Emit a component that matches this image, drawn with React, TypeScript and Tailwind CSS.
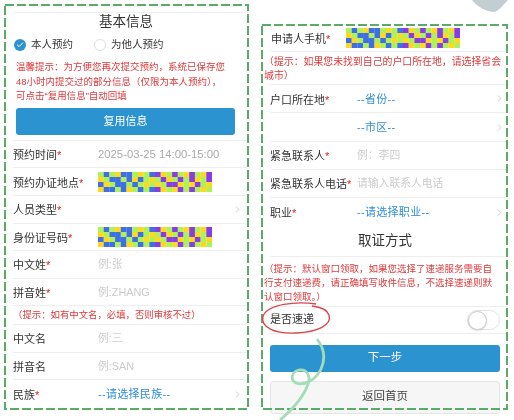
import { ChevronRight, Check } from "lucide-react";

const COLORS: Record<string, string> = {
  B: "#3f6fe8",
  Y: "#ffd81f",
  L: "#aef25a",
  P: "#8a3be8",
};

const MOSAIC_ROWS = [
  "LBLYBBLYLBPYLPLYPLYP",
  "YLBBLBYBLYLPYLPLPYLP",
  "BYLBBLBLYLYLPPYLYPLY",
  "YBBLBYLBLBPYLYPLPLYL",
];

// pixelated block that hides personal data in the screenshot
function Mosaic() {
  return (
    <svg width="114" height="20" className="block">
      {MOSAIC_ROWS.map((row, y) =>
        row
          .split("")
          .map((c, x) => (
            <rect
              key={`${x}-${y}`}
              x={x * 5.7}
              y={y * 5}
              width={5.8}
              height={5.1}
              fill={COLORS[c]}
            />
          ))
      )}
    </svg>
  );
}

function Label({ text, required = true }: { text: string; required?: boolean }) {
  return (
    <span className="text-[11px] text-[#333] whitespace-nowrap">
      {text}
      {required && <span className="text-[#e02020]">*</span>}
    </span>
  );
}

function Arrow({ right = false }: { right?: boolean }) {
  return (
    <ChevronRight
      strokeWidth={1.5}
      className={`w-[11px] h-[11px] ml-auto text-[#bbb] ${right ? "mr-[1px]" : "mr-[3px]"}`}
    />
  );
}

function Row({
  label,
  required = true,
  value,
  tone = "placeholder",
  mosaic,
  chevron,
  right = false,
}: {
  label?: string;
  required?: boolean;
  value?: string;
  tone?: "placeholder" | "date" | "link";
  mosaic?: boolean;
  chevron?: boolean;
  right?: boolean;
}) {
  const toneClass =
    tone === "link"
      ? "text-[11px] tracking-[0.3px] text-[#2f8fd8]"
      : tone === "date"
        ? "text-[11.3px] text-[#aaa]"
        : "text-[10.8px] text-[#ccc]";
  return (
    <div
      className={`flex items-center border-b border-[#eee] shrink-0 ${right ? "h-[28.2px]" : "h-[27.6px]"}`}
    >
      <div className={`shrink-0 ${right ? "w-[87px]" : "w-[85px]"}`}>
        {label && <Label text={label} required={required} />}
      </div>
      {mosaic && <Mosaic />}
      {value && <span className={`whitespace-nowrap ${toneClass}`}>{value}</span>}
      {chevron && <Arrow right={right} />}
    </div>
  );
}

function DashedFrame({ w, h }: { w: number; h: number }) {
  return (
    <svg width={w} height={h} className="absolute left-0 top-0 pointer-events-none">
      <rect
        x="1"
        y="1"
        width={w - 2}
        height={h - 2}
        fill="none"
        stroke="#5aab68"
        strokeWidth="2"
        strokeDasharray="9 3"
      />
    </svg>
  );
}

export default function App() {
  return (
    <div
      className="relative w-[514px] h-[420px] overflow-hidden bg-white flex blur-[0.5px]"
      style={{ fontFamily: '"Liberation Sans", "Noto Sans CJK SC", sans-serif' }}
    >
      {/* left phone capture */}
      <div className="relative w-[245px] h-[406px] ml-[4px] mt-[4px] shrink-0 pl-[9px] pt-[8px]">
        <div className="w-[233px] flex flex-col border-t border-[#eee]">
          <div className="h-[19px] flex items-center justify-center text-[13.5px] text-[#333] pr-[7px]">基本信息</div>
          <div className="h-[24px] flex items-center mt-[1px]">
            <span className="w-[12px] h-[12px] ml-[1px] rounded-full bg-[#2a93d0] flex items-center justify-center">
              <Check className="w-[8px] h-[8px] text-white" strokeWidth={3} />
            </span>
            <span className="ml-[5px] text-[10.5px] text-[#333]">本人预约</span>
            <span className="w-[12px] h-[12px] ml-[21px] rounded-full border border-[#ddd]" />
            <span className="ml-[5px] text-[10.5px] text-[#333]">为他人预约</span>
          </div>
          <p className="mt-[3px] pl-[3px] text-[9.5px] leading-[14.6px] text-[#e0383a]">
            温馨提示：为方便您再次提交预约，系统已保存您
            <br />
            48小时内提交过的部分信息（仅限为本人预约），
            <br />
            可点击“复用信息”自动回填
          </p>
          <button className="mt-[4px] ml-[3px] w-[219px] h-[27px] rounded-[3px] bg-[#2a93d0] text-white text-[11px] shrink-0">
            复用信息
          </button>
          <div className="h-[6px] border-b border-[#eee] shrink-0" />
          <Row label="预约时间" value="2025-03-25 14:00-15:00" tone="date" />
          <Row label="预约办证地点" mosaic />
          <Row label="人员类型" chevron />
          <Row label="身份证号码" mosaic />
          <Row label="中文姓" value="例:张" />
          <Row label="拼音姓" value="例:ZHANG" />
          <div className="h-[18.6px] flex items-center border-b border-[#eee] text-[9.4px] text-[#e0383a] whitespace-nowrap">
            （提示：如有中文名，必填，否则审核不过）
          </div>
          <Row label="中文名" required={false} value="例:三" />
          <Row label="拼音名" required={false} value="例:SAN" />
          <div className="h-[28px] flex items-center shrink-0">
            <div className="w-[85px] shrink-0">
              <Label text="民族" />
            </div>
            <span className="text-[11px] tracking-[0.3px] text-[#2f8fd8]">--请选择民族--</span>
            <Arrow />
          </div>
        </div>
        <DashedFrame w={245} h={406} />
      </div>

      {/* right phone capture */}
      <div className="relative w-[247px] h-[386px] ml-[12px] mt-[24px] shrink-0 pl-[3px]">
        <div className="w-[242px] flex flex-col">
          <div className="h-[28.3px] ml-[6px] flex items-center border-b border-[#eee] shrink-0">
            <div className="w-[76px] shrink-0 pl-[1px]">
              <Label text="申请人手机" />
            </div>
            <Mosaic />
          </div>
          <p className="h-[32px] pt-[3px] text-[9.9px] leading-[14px] text-[#e0383a] shrink-0 whitespace-nowrap">
            （提示：如果您未找到自己的户口所在地，请选择省会
            <br />
            城市）
          </p>
          <div className="ml-[6px] flex flex-col border-t border-[#eee]">
            <Row label="户口所在地" value="--省份--" tone="link" chevron right />
            <Row value="--市区--" tone="link" chevron right />
            <Row label="紧急联系人" value="例：李四" right />
            <Row label="紧急联系人电话" value="请输入联系人电话" right />
            <div className="h-[28.2px] flex items-center shrink-0">
              <div className="w-[87px] shrink-0">
                <Label text="职业" />
              </div>
              <span className="text-[11px] tracking-[0.3px] text-[#2f8fd8]">--请选择职业--</span>
              <Arrow right />
            </div>
            <div className="h-[30.3px] flex items-center justify-center border-b border-[#eee] text-[13.5px] text-[#333] pr-[6px] shrink-0">
              取证方式
            </div>
          </div>
          <p className="h-[49px] pt-[5px] text-[9.5px] leading-[14.4px] text-[#e0383a] whitespace-nowrap shrink-0">
            （提示：默认窗口领取，如果您选择了速递服务需要自
            <br />
            行支付速递费，请正确填写收件信息，不选择速递则默
            <br />
            认窗口领取。）
          </p>
          <div className="h-[28px] ml-[6px] flex items-center border-t border-b border-[#eee] shrink-0">
            <span className="text-[11px] text-[#333]">是否速递</span>
            <span className="ml-auto mr-[6px] w-[33px] h-[20px] rounded-full border border-[#e5e5e5] relative">
              <span className="absolute left-0 top-0 w-[19px] h-[19px] rounded-full bg-white border border-[#ccc] shadow-sm" />
            </span>
          </div>
          <button className="mt-[11px] ml-[6px] w-[230px] h-[27px] rounded-[3px] bg-[#2a93d0] text-white text-[11.5px] shrink-0">
            下一步
          </button>
          <button className="mt-[9px] ml-[6px] w-[230px] h-[33px] rounded-[3px] bg-[#f6f6f6] border border-[#e5e5e5] text-[#444] text-[11.5px] shrink-0">
            返回首页
          </button>
        </div>
        <DashedFrame w={247} h={386} />
      </div>

      {/* markup drawn on top of the screenshot */}
      <svg width="514" height="420" className="absolute left-0 top-0 pointer-events-none">
        <path d="M472 0 C478 8 488 12 494 12 C499 11 502 6 508 0 Z" fill="#c3ced3" />
        <path
          d="M316 304 C296 301 268 304 263 316 C260 328 276 334 296 333 C318 332 332 325 329 315 C327 309 320 307 312 306"
          fill="none"
          stroke="#d9474a"
          strokeWidth="1.4"
        />
        <path
          d="M317 339 C324 348 326 358 321 369 C316 380 304 386 296 383 C290 380 291 372 299 370 C307 369 311 376 308 384 C304 396 294 408 280 420"
          fill="none"
          stroke="#a5dcb8"
          strokeWidth="2.8"
        />
      </svg>
    </div>
  );
}
